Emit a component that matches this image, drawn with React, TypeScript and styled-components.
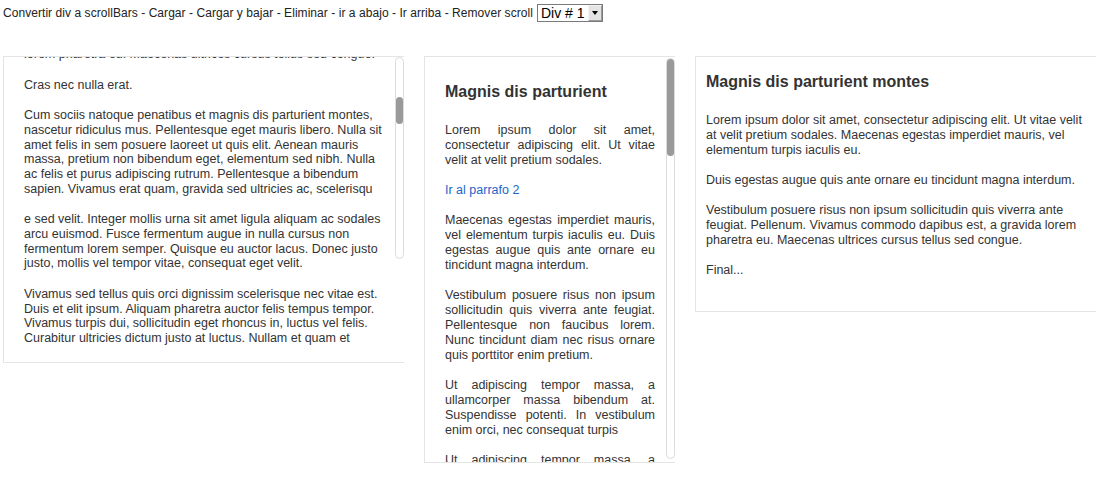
import React from "react";
import styled, { createGlobalStyle } from "styled-components";

const GlobalStyle = createGlobalStyle`
  html, body {
    margin: 0;
    padding: 0;
    background: #ffffff;
  }
  body {
    font-family: "Liberation Sans", Arial, sans-serif;
    font-size: 12px;
    color: #333333;
  }
`;

const Page = styled.div`
  padding: 0 3px;
  width: 1112px;
  box-sizing: border-box;
`;

const Toolbar = styled.div`
  display: flex;
  align-items: center;
  gap: 4px;
  height: 26px;
  color: #222222;
  font-size: 12px;
  letter-spacing: 0.055px;
`;

const SelectBox = styled.div`
  display: inline-flex;
  align-items: stretch;
  height: 18px;
  box-sizing: border-box;
  border: 1px solid #7a7a7a;
  background: #ffffff;
  margin-top: -1px;
  letter-spacing: 0;
`;

const NativeSelect = styled.select`
  appearance: none;
  -webkit-appearance: none;
  border: none;
  outline: none;
  background: transparent;
  font-family: "Liberation Sans", Arial, sans-serif;
  font-size: 14px;
  color: #000000;
  padding: 0 2px 0 3px;
  width: 50px;
  height: 16px;
  line-height: 16px;
`;

const ArrowButton = styled.span`
  display: flex;
  align-items: center;
  justify-content: center;
  width: 14px;
  box-sizing: border-box;
  background: #e4e4e4;
  border: 1px solid #9a9a9a;
  border-top-color: #f4f4f4;
  border-left-color: #f4f4f4;

  &::after {
    content: "";
    width: 0;
    height: 0;
    border-left: 3.5px solid transparent;
    border-right: 3.5px solid transparent;
    border-top: 4px solid #000000;
  }
`;

const PanelRow = styled.div`
  display: flex;
  align-items: flex-start;
  gap: 20px;
  margin-top: 30px;
`;

const Panel = styled.div<{ $width: number; $height?: number; $pad: string }>`
  position: relative;
  box-sizing: border-box;
  width: ${(p) => p.$width}px;
  ${(p) => (p.$height ? `height: ${p.$height}px; overflow: hidden;` : "")}
  padding: ${(p) => p.$pad};
  border-top: 1px solid #e4e4e4;
  border-left: 1px solid #e4e4e4;
  border-bottom: 1px solid #e4e4e4;
  background: #ffffff;
`;

const Content = styled.div<{ $shift?: number; $justify?: boolean; $lh: number; $gap: number }>`
  margin-top: ${(p) => p.$shift ?? 0}px;
  font-size: 12.5px;
  line-height: ${(p) => p.$lh}px;
  text-align: ${(p) => (p.$justify ? "justify" : "left")};
  color: #333333;

  p {
    margin: 0 0 ${(p) => p.$gap}px;
  }
`;

const Heading = styled.h3`
  font-family: "Liberation Sans", Arial, sans-serif;
  font-size: 16px;
  font-weight: bold;
  line-height: 18px;
  color: #333333;
  margin: 6px 0 22px;
`;

const Link = styled.a`
  color: #1e64c8;
  text-decoration: none;
`;

const Track = styled.div<{ $left: number; $top: number; $height: number }>`
  position: absolute;
  left: ${(p) => p.$left}px;
  top: ${(p) => p.$top}px;
  width: 9px;
  height: ${(p) => p.$height}px;
  box-sizing: border-box;
  border: 1px solid #dcdcdc;
  border-radius: 5px;
  background: #ffffff;
`;

const Thumb = styled.div<{ $top: number; $height: number }>`
  position: absolute;
  left: 0;
  top: ${(p) => p.$top}px;
  width: 7px;
  height: ${(p) => p.$height}px;
  border-radius: 4px;
  background: #9a9a9a;
`;

export default function App() {
  return (
    <>
      <GlobalStyle />
      <Page>
        <Toolbar>
          <span>
            Convertir div a scrollBars - Cargar - Cargar y bajar - Eliminar - ir a abajo - Ir arriba - Remover scroll
          </span>
          <SelectBox>
            <NativeSelect defaultValue="1">
              <option value="1">Div # 1</option>
              <option value="2">Div # 2</option>
              <option value="3">Div # 3</option>
            </NativeSelect>
            <ArrowButton />
          </SelectBox>
        </Toolbar>

        <PanelRow>
          <Panel $width={401} $height={307} $pad="0 20px">
            <Content $shift={-10} $lh={14.65} $gap={16}>
              <p>lorem pharetra eu. Maecenas ultrices cursus tellus sed congue.</p>
              <p>Cras nec nulla erat.</p>
              <p>
                Cum sociis natoque penatibus et magnis dis parturient montes, nascetur ridiculus mus.
                Pellentesque eget mauris libero. Nulla sit amet felis in sem posuere laoreet ut quis elit.
                Aenean mauris massa, pretium non bibendum eget, elementum sed nibh. Nulla ac felis et purus
                adipiscing rutrum. Pellentesque a bibendum sapien. Vivamus erat quam, gravida sed ultricies
                ac, scelerisqu
              </p>
              <p>
                e sed velit. Integer mollis urna sit amet ligula aliquam ac sodales arcu euismod. Fusce
                fermentum augue in nulla cursus non fermentum lorem semper. Quisque eu auctor lacus. Donec
                justo justo, mollis vel tempor vitae, consequat eget velit.
              </p>
              <p>
                Vivamus sed tellus quis orci dignissim scelerisque nec vitae est. Duis et elit ipsum. Aliquam
                pharetra auctor felis tempus tempor. Vivamus turpis dui, sollicitudin eget rhoncus in, luctus
                vel felis. Curabitur ultricies dictum justo at luctus. Nullam et quam et
              </p>
            </Content>
            <Track $left={391} $top={0} $height={202}>
              <Thumb $top={39} $height={27} />
            </Track>
          </Panel>

          <Panel $width={251} $height={407} $pad="20px 20px 0">
            <Heading>Magnis dis parturient</Heading>
            <Content $justify $lh={15} $gap={15}>
              <p>Lorem ipsum dolor sit amet, consectetur adipiscing elit. Ut vitae velit at velit pretium sodales.</p>
              <p>
                <Link href="#parrafo2">Ir al parrafo 2</Link>
              </p>
              <p>
                Maecenas egestas imperdiet mauris, vel elementum turpis iaculis eu. Duis egestas augue quis
                ante ornare eu tincidunt magna interdum.
              </p>
              <p>
                Vestibulum posuere risus non ipsum sollicitudin quis viverra ante feugiat. Pellentesque non
                faucibus lorem. Nunc tincidunt diam nec risus ornare quis porttitor enim pretium.
              </p>
              <p>
                Ut adipiscing tempor massa, a ullamcorper massa bibendum at. Suspendisse potenti. In
                vestibulum enim orci, nec consequat turpis
              </p>
              <p>
                Ut adipiscing tempor massa, a ullamcorper massa bibendum at. Suspendisse potenti. In
                vestibulum enim orci, nec consequat turpis
              </p>
            </Content>
            <Track $left={241} $top={1} $height={401}>
              <Thumb $top={0} $height={97} />
            </Track>
          </Panel>

          <Panel $width={401} $pad="10px 10px 18px">
            <Heading>Magnis dis parturient montes</Heading>
            <Content $lh={15} $gap={15}>
              <p>
                Lorem ipsum dolor sit amet, consectetur adipiscing elit. Ut vitae velit at velit pretium
                sodales. Maecenas egestas imperdiet mauris, vel elementum turpis iaculis eu.
              </p>
              <p>Duis egestas augue quis ante ornare eu tincidunt magna interdum.</p>
              <p>
                Vestibulum posuere risus non ipsum sollicitudin quis viverra ante feugiat. Pellenum. Vivamus
                commodo dapibus est, a gravida lorem pharetra eu. Maecenas ultrices cursus tellus sed congue.
              </p>
              <p>Final...</p>
            </Content>
          </Panel>
        </PanelRow>
      </Page>
    </>
  );
}
